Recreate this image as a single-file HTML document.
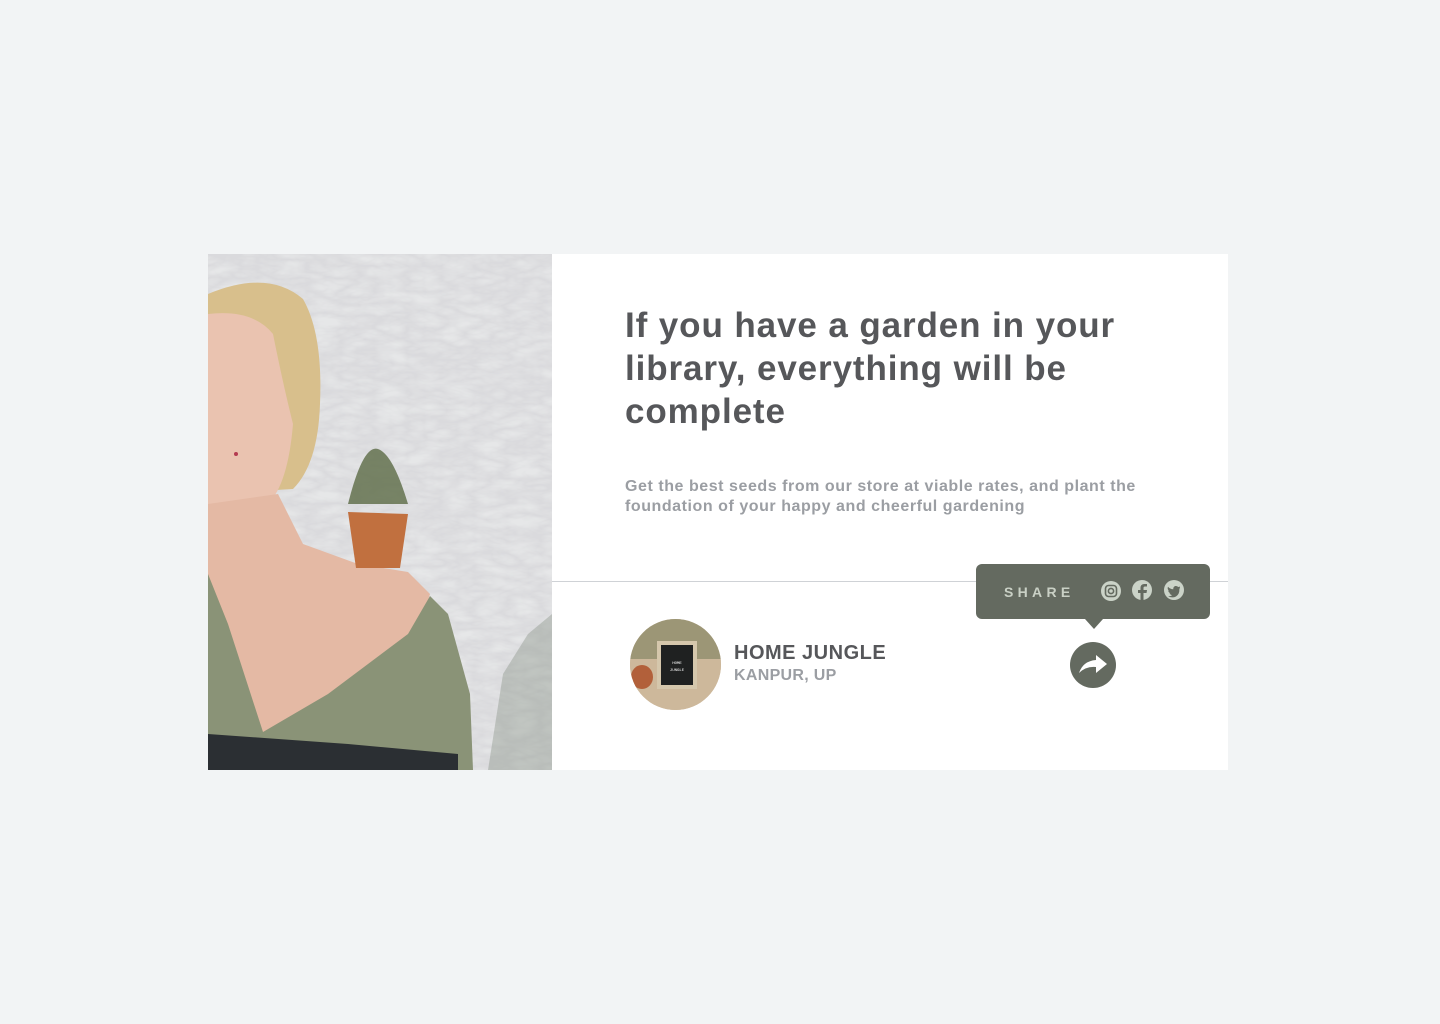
<!DOCTYPE html>
<html><head><style>
*{margin:0;padding:0;box-sizing:border-box}
body{width:1440px;height:1024px;background:#f2f4f5;font-family:"Liberation Sans",sans-serif;position:relative;overflow:hidden}
.card{position:absolute;left:208px;top:254px;width:1020px;height:516px;background:#fff}
.photo{position:absolute;left:0;top:0;width:344px;height:516px;overflow:hidden}
h1{position:absolute;left:417px;top:50px;width:560px;font-size:35px;line-height:43px;font-weight:bold;color:#56575a;letter-spacing:0.9px}
p.d{position:absolute;left:417px;top:223px;width:560px;font-size:16px;line-height:20px;color:#9b9ea3;font-weight:bold;letter-spacing:0.55px}
.line{position:absolute;left:344px;top:327px;width:676px;height:1px;background:#cfd2d6}
.av{position:absolute;left:422px;top:365px;width:91px;height:91px;border-radius:50%;overflow:hidden;background:#c9b69a}
.name{position:absolute;left:526px;top:388px;font-size:20px;font-weight:bold;color:#56575a;letter-spacing:0.5px}
.loc{position:absolute;left:526px;top:413px;font-size:16px;font-weight:bold;color:#9b9ea3;letter-spacing:0.3px}
.tip{position:absolute;left:768px;top:310px;width:234px;height:55px;background:#646a60;border-radius:6px}
.tip:after{content:"";position:absolute;left:109px;top:55px;border:9px solid transparent;border-top:10px solid #646a60;border-bottom:0}
.share{position:absolute;left:28px;top:20px;font-size:14px;letter-spacing:4.3px;color:#c9d0c5;font-weight:bold}
.btn{position:absolute;left:862px;top:388px;width:46px;height:46px;border-radius:50%;background:#646a60}
</style></head><body>
<div class="card">
 <div class="photo">
  <svg width="344" height="516" viewBox="0 0 344 516">
   <defs><filter id="n"><feTurbulence baseFrequency="0.03 0.08" numOctaves="3" seed="3"/><feColorMatrix values="0 0 0 0 0.7 0 0 0 0 0.7 0 0 0 0 0.72 0 0 0 -1.6 1.1"/></filter></defs>
   <rect width="344" height="516" fill="#e6e7e8"/>
   <rect width="344" height="516" filter="url(#n)"/>
   <path d="M280 516 L295 420 L320 380 L344 360 L344 516Z" fill="#7c8877" opacity="0.35"/>
   <path d="M0 40 Q60 15 95 45 Q115 80 112 150 Q110 210 85 235 L0 240Z" fill="#d8bf8c"/>
   <path d="M0 60 Q45 55 65 80 Q75 130 85 170 Q80 230 60 250 L0 255Z" fill="#eac3b0"/>
   <path d="M0 250 L70 240 L95 290 L150 310 L200 318 L222 340 L210 380 L120 450 L60 480 L0 470Z" fill="#e4b9a4"/>
   <path d="M0 320 L20 370 L55 478 L120 440 L200 380 L222 342 L240 360 L262 440 L265 516 L0 516Z" fill="#8a9377"/>
   <path d="M0 480 L140 490 L250 500 L250 516 L0 516Z" fill="#2b2f33"/>
   <path d="M140 258 L200 260 L192 314 L148 314Z" fill="#c1703f"/>
   <path d="M140 250 Q155 190 170 195 Q185 200 200 250Z" fill="#5b6a45" opacity="0.8"/>
   <circle cx="28" cy="200" r="2" fill="#b43b50"/>
  </svg>
 </div>
 <h1>If you have a garden in your library, everything will be complete</h1>
 <p class="d">Get the best seeds from our store at viable rates, and plant the foundation of your happy and cheerful gardening</p>
 <div class="line"></div>
 <div class="av"><svg width="91" height="91"><rect width="91" height="91" fill="#cdb89b"/><path d="M0 0 H91 V40 H0Z" fill="#7b7f5d" opacity=".6"/><rect x="27" y="22" width="40" height="48" fill="#d5c7ac"/><rect x="31" y="26" width="32" height="40" fill="#1f2121"/><ellipse cx="12" cy="58" rx="11" ry="12" fill="#b2603a"/><text x="47" y="45" font-size="4" fill="#fff" text-anchor="middle" font-family="Liberation Mono">HOME</text><text x="47" y="52" font-size="4" fill="#fff" text-anchor="middle" font-family="Liberation Mono">JUNGLE</text></svg></div>
 <div class="name">HOME JUNGLE</div>
 <div class="loc">KANPUR, UP</div>
 <div class="tip"><div class="share">SHARE</div>
  <svg style="position:absolute;left:125px;top:16px" width="90" height="22" viewBox="0 0 90 22">
   <circle cx="10" cy="11" r="10" fill="#cbd3c8"/><rect x="4.5" y="5.5" width="11" height="11" rx="3" fill="none" stroke="#646a60" stroke-width="1.6"/><circle cx="10" cy="11" r="2.6" fill="none" stroke="#646a60" stroke-width="1.6"/>
   <circle cx="41" cy="10" r="10" fill="#cbd3c8"/><path d="M42.5 21 V13 H45.5 L46 10 H42.5 V8 Q42.5 6.5 44 6.5 H46 V4 H43.5 Q39.5 4 39.5 8 V10 H37 V13 H39.5 V21Z" fill="#646a60"/>
   <circle cx="73" cy="10" r="10" fill="#cbd3c8"/><path d="M79 6.5 Q78 7 77.2 7 Q76 5.7 74.3 6 Q72 6.8 72.3 9.3 Q69 9 67 6.7 Q66 9 68 10.7 L67.2 10.5 Q67.5 12.6 69.4 13.2 L68.5 13.3 Q69.3 15 71.2 15.1 Q69.5 16.4 67 16.2 Q71 18.5 75 16.5 Q78.6 14.3 78.4 9 Q79 8.2 79 6.5Z" fill="#646a60"/>
  </svg>
 </div>
 <div class="btn"><svg width="46" height="46" viewBox="0 0 46 46"><path d="M9 31 Q13 19 26 18 V13 L37 22 L26 31 V25 Q16 24 9 31Z" fill="#fff"/></svg></div>
</div>
</body></html>
